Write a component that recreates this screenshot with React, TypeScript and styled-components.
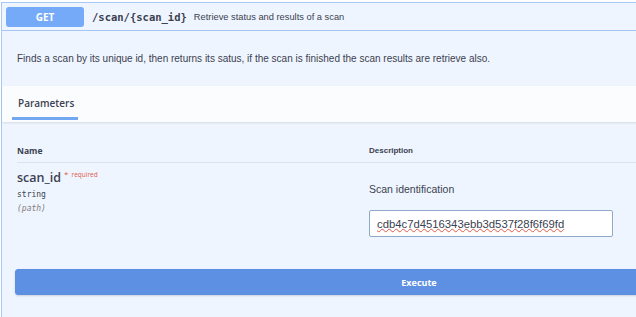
import React from 'react';
import styled, { createGlobalStyle } from 'styled-components';

const GlobalStyle = createGlobalStyle`
  html, body {
    margin: 0;
    padding: 0;
    background: #ffffff;
    overflow: hidden;
  }
  body {
    font-family: "Liberation Sans", Arial, sans-serif;
  }
`;

const Page = styled.div`
  width: 636px;
  height: 317px;
  overflow: hidden;
  background: #ffffff;
`;

const OpBlock = styled.div`
  margin: 2px 0 0 1px;
  width: 860px;
  border: 1px solid #a8c9f3;
  border-right: none;
  background: #eff5fe;
`;

const Summary = styled.div`
  display: flex;
  align-items: center;
  height: 27px;
  padding: 0 4px;
  border-bottom: 1px solid #a3c6f2;
`;

const Method = styled.span`
  display: flex;
  align-items: center;
  justify-content: center;
  width: 78px;
  height: 20px;
  border-radius: 3px;
  background: #74aaf7;
  color: #ffffff;
  font-family: "Open Sans", sans-serif;
  font-weight: 700;
  font-size: 10px;
`;

const Path = styled.span`
  margin-left: 8px;
  font-family: "DejaVu Sans Mono", monospace;
  font-weight: 700;
  font-size: 10.5px;
  color: #3b4151;
`;

const SummaryText = styled.span`
  margin-left: 7px;
  font-size: 9.3px;
  color: #3b4151;
`;

const Description = styled.div`
  height: 55px;
  display: flex;
  align-items: center;
  padding: 0 15px;
  font-size: 10px;
  color: #3b4151;
`;

const SectionHeader = styled.div`
  height: 36px;
  display: flex;
  align-items: flex-end;
  padding-left: 10px;
  background: #fbfcfe;
  box-shadow: 0 1px 2px rgba(59, 65, 81, 0.15);
`;

const Tab = styled.div`
  width: 66px;
  padding-bottom: 7px;
  border-bottom: 3px solid #72a8f1;
  margin-bottom: 2px;
  box-sizing: border-box;
  padding-left: 6px;
  font-family: "Open Sans", sans-serif;
  font-weight: 600;
  font-size: 10px;
  color: #3b4151;
`;

const Table = styled.div`
  padding-left: 15px;
`;

const HeaderRow = styled.div`
  display: grid;
  grid-template-columns: 352px 1fr;
  align-items: center;
  box-sizing: border-box;
  padding-top: 16px;
  height: 41px;
  border-bottom: 1px solid #dde3ec;
`;

const HeadCell = styled.div<{ sans?: boolean }>`
  font-family: ${({ sans }) => (sans ? '"Liberation Sans", Arial, sans-serif' : '"Open Sans", sans-serif')};
  font-weight: 700;
  font-size: ${({ sans }) => (sans ? '8px' : '8.5px')};
  color: #3b4151;
`;

const Row = styled.div`
  display: grid;
  grid-template-columns: 352px 1fr;
  padding-top: 6px;
`;

const ParamCol = styled.div`
  display: flex;
  flex-direction: column;
`;

const ParamName = styled.div`
  font-family: "Open Sans", sans-serif;
  font-weight: 600;
  font-size: 12.5px;
  color: #3b4151;
  line-height: 17px;
`;

const Required = styled.span`
  position: relative;
  top: -5px;
  margin-left: 3px;
  font-size: 6.5px;
  font-weight: 400;
  color: #e05a4a;
`;

const Star = styled.span`
  font-size: 8px;
  margin-right: 3px;
`;

const TypeText = styled.div<{ italic?: boolean }>`
  font-family: "DejaVu Sans Mono", monospace;
  font-size: 8px;
  line-height: 14px;
  color: ${({ italic }) => (italic ? '#808080' : '#3b4151')};
  font-style: ${({ italic }) => (italic ? 'italic' : 'normal')};
`;

const DescCol = styled.div`
  display: flex;
  flex-direction: column;
  padding-top: 13px;
`;

const DescText = styled.div`
  font-size: 10.5px;
  color: #3b4151;
  line-height: 14px;
`;

const Field = styled.div`
  position: relative;
  margin-top: 14px;
  width: 244px;
  height: 27px;
`;

const Input = styled.input`
  width: 100%;
  height: 100%;
  box-sizing: border-box;
  border: 1px solid #8fa8cc;
  border-radius: 2px;
  padding: 0 7px;
  background: #ffffff;
  font-family: "Liberation Sans", Arial, sans-serif;
  font-size: 11.3px;
  color: #3b4151;
  outline: none;
`;

/* spell-check squiggle drawn over the input value */
const Squiggle = styled.span`
  position: absolute;
  left: 8px;
  top: 6px;
  font-family: "Liberation Sans", Arial, sans-serif;
  font-size: 11.3px;
  color: transparent;
  pointer-events: none;
  text-decoration: underline wavy #e05a4a;
  text-decoration-thickness: 1px;
  text-underline-offset: 2px;
`;

const ExecuteWrap = styled.div`
  padding: 32px 0 30px 13px;
`;

const ExecuteButton = styled.button`
  display: block;
  width: 808px;
  height: 26px;
  border: 1px solid #5b8fe1;
  border-radius: 3px;
  background: #5d90e2;
  box-shadow: 0 1px 2px rgba(0, 0, 0, 0.15);
  color: #ffffff;
  font-family: "Open Sans", sans-serif;
  font-weight: 700;
  font-size: 9px;
  cursor: pointer;
`;

const scanId = 'cdb4c7d4516343ebb3d537f28f6f69fd';

export default function App() {
  return (
    <Page>
      <GlobalStyle />
      <OpBlock>
        <Summary>
          <Method>GET</Method>
          <Path>/scan/{'{scan_id}'}</Path>
          <SummaryText>Retrieve status and results of a scan</SummaryText>
        </Summary>
        <Description>
          Finds a scan by its unique id, then returns its satus, if the scan is finished the scan results are retrieve also.
        </Description>
        <SectionHeader>
          <Tab>Parameters</Tab>
        </SectionHeader>
        <Table>
          <HeaderRow>
            <HeadCell>Name</HeadCell>
            <HeadCell sans>Description</HeadCell>
          </HeaderRow>
          <Row>
            <ParamCol>
              <ParamName>
                scan_id
                <Required>
                  <Star>*</Star>required
                </Required>
              </ParamName>
              <TypeText>string</TypeText>
              <TypeText italic>(path)</TypeText>
            </ParamCol>
            <DescCol>
              <DescText>Scan identification</DescText>
              <Field>
                <Input defaultValue={scanId} spellCheck={false} />
                <Squiggle>{scanId}</Squiggle>
              </Field>
            </DescCol>
          </Row>
        </Table>
        <ExecuteWrap>
          <ExecuteButton>Execute</ExecuteButton>
        </ExecuteWrap>
      </OpBlock>
    </Page>
  );
}
